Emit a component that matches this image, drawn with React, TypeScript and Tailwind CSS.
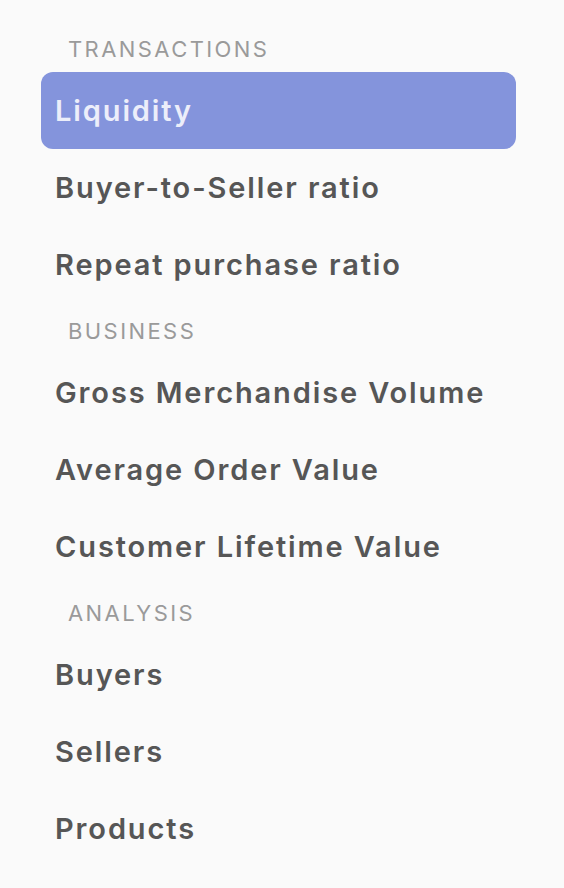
const sections = [
  {
    title: "TRANSACTIONS",
    items: ["Liquidity", "Buyer-to-Seller ratio", "Repeat purchase ratio"],
  },
  {
    title: "BUSINESS",
    items: ["Gross Merchandise Volume", "Average Order Value", "Customer Lifetime Value"],
  },
  {
    title: "ANALYSIS",
    items: ["Buyers", "Sellers", "Products"],
  },
];

export default function App() {
  const active = "Liquidity";
  return (
    <div className="min-h-[888px] w-[564px] bg-[#fafafa] pt-[21px] pl-[41px] pr-[48px] font-['Inter','Liberation_Sans',sans-serif]">
      {sections.map((section) => (
        <div key={section.title}>
          <div className="h-[51px] pl-[27px] pt-[17px] text-[22px] leading-[22px] tracking-[0.11em] text-[#9a9a9a]">
            {section.title}
          </div>
          {section.items.map((item) => (
            <div
              key={item}
              className={`flex h-[77px] items-center rounded-[12px] px-[14px] text-[29px] font-semibold tracking-[0.065em] ${
                item === active ? "bg-[#8494dc] text-[#eceefa]" : "text-[#565656]"
              }`}
            >
              {item}
            </div>
          ))}
        </div>
      ))}
    </div>
  );
}
